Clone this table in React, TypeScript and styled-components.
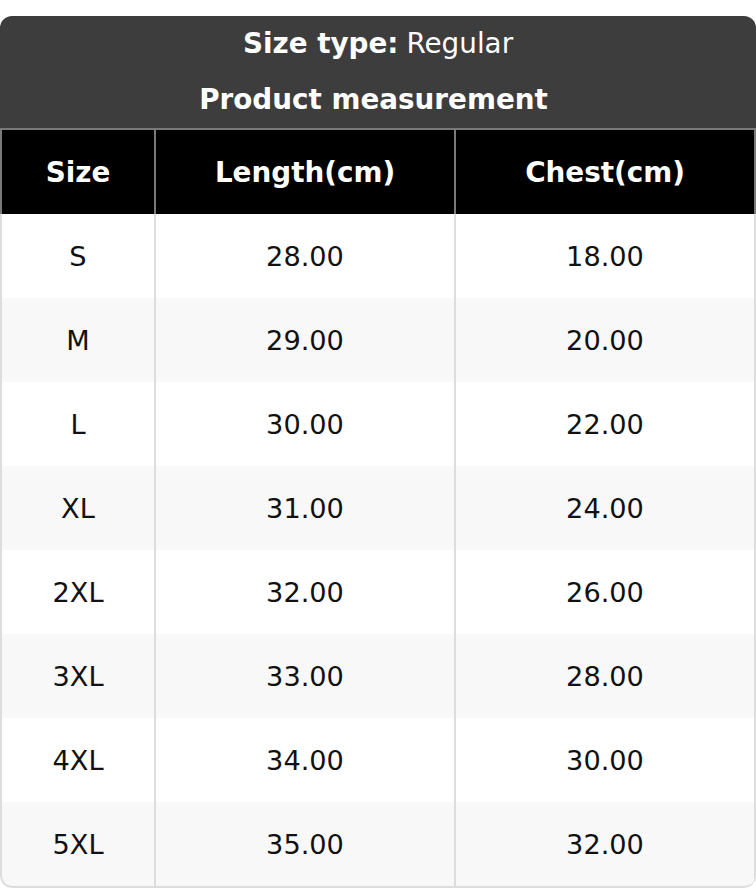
import React from "react";
import styled, { createGlobalStyle } from "styled-components";

const Global = createGlobalStyle`
  *, *::before, *::after { box-sizing: border-box; }
  html, body { margin: 0; padding: 0; background: #ffffff; }
  body { font-family: "DejaVu Sans", "Noto Sans", sans-serif; }
`;

const Page = styled.div`
  padding-top: 16px;
  width: 756px;
`;

const Card = styled.div`
  width: 756px;
  border-radius: 12px;
  overflow: hidden;
  background: #ffffff;
`;

const Title = styled.div`
  background: #3d3d3d;
  color: #ffffff;
  display: flex;
  flex-direction: column;
  border-bottom: 2px solid #7a7a7a;
`;

const TitleLine = styled.div<{ $bold?: boolean }>`
  height: 56px;
  display: flex;
  align-items: center;
  justify-content: center;
  padding-bottom: 1px;
  padding-right: ${(p) => (p.$bold ? 9 : 0)}px;
  font-size: 27.8px;
  font-weight: ${(p) => (p.$bold ? 700 : 400)};
  b { font-weight: 700; margin-right: 8px; }
`;

const Row = styled.div<{ $head?: boolean; $alt?: boolean; $last?: boolean }>`
  display: grid;
  grid-template-columns: 154px 300px 300px;
  height: ${(p) => (p.$last ? 86 : 84)}px;
  padding-bottom: 2px;
  background: ${(p) => (p.$head ? "#000000" : p.$alt ? "#f8f8f8" : "#ffffff")};
  color: ${(p) => (p.$head ? "#ffffff" : "#111111")};
  font-weight: ${(p) => (p.$head ? 700 : 400)};
  font-size: ${(p) => (p.$head ? 27.8 : 27.2)}px;
  border-bottom: ${(p) => (p.$last ? "2px solid #dddddd" : "none")};
  border-radius: ${(p) => (p.$last ? "0 0 12px 12px" : "0")};
  --line: ${(p) => (p.$head ? "#7a7a7a" : "#dddddd")};
  border-left: 2px solid var(--line);
`;

const Cell = styled.div`
  display: flex;
  align-items: center;
  justify-content: center;
  border-right: 2px solid var(--line);
  margin-bottom: -2px;
`;

const rows = [
  ["S", "28.00", "18.00"],
  ["M", "29.00", "20.00"],
  ["L", "30.00", "22.00"],
  ["XL", "31.00", "24.00"],
  ["2XL", "32.00", "26.00"],
  ["3XL", "33.00", "28.00"],
  ["4XL", "34.00", "30.00"],
  ["5XL", "35.00", "32.00"],
];

export default function App() {
  return (
    <Page>
      <Global />
      <Card>
        <Title>
          <TitleLine>
            <b>Size type:</b>Regular
          </TitleLine>
          <TitleLine $bold>Product measurement</TitleLine>
        </Title>
        <Row $head>
          <Cell>Size</Cell>
          <Cell>Length(cm)</Cell>
          <Cell>Chest(cm)</Cell>
        </Row>
        {rows.map((r, i) => (
          <Row key={r[0]} $alt={i % 2 === 1} $last={i === rows.length - 1}>
            <Cell>{r[0]}</Cell>
            <Cell>{r[1]}</Cell>
            <Cell>{r[2]}</Cell>
          </Row>
        ))}
      </Card>
    </Page>
  );
}
